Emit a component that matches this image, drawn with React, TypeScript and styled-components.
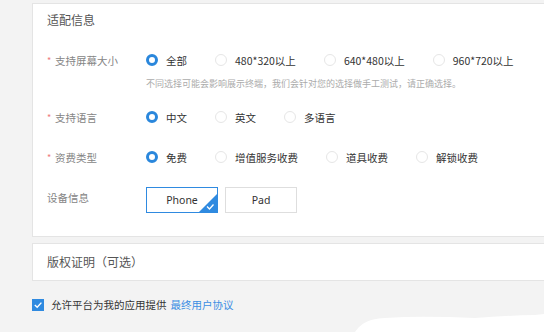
import React from "react";
import styled, { createGlobalStyle } from "styled-components";

const Global = createGlobalStyle`
  html, body { margin: 0; padding: 0; background: #ffffff; }
  body { font-family: "Noto Sans CJK SC", "Noto Sans", sans-serif; }
`;

const Page = styled.div`
  position: relative;
  width: 544px;
  height: 332px;
  background: #f3f3f3;
  padding: 3px 0 0 32px;
  box-sizing: border-box;
  overflow: hidden;
`;

const Card = styled.section<{ $compact?: boolean }>`
  background: #fff;
  border: 1px solid #e4e4e4;
  border-right: none;
  box-sizing: border-box;
  padding: ${(p) => (p.$compact ? "8px 0 8px 14px" : "6px 0 23px 14px")};
  margin-bottom: 6px;
`;

const Title = styled.div`
  font-size: 12px;
  line-height: 20px;
  color: #555;
  height: 20px;
`;

const Row = styled.div<{ $mt: number }>`
  display: flex;
  align-items: center;
  height: 20px;
  margin-top: ${(p) => p.$mt}px;
`;

const Label = styled.div`
  width: 99px;
  flex: none;
  font-size: 10.5px;
  color: #858585;
  display: flex;
  align-items: center;
`;

const Star = styled.span`
  color: #ee7b7b;
  width: 8px;
  font-size: 9px;
`;

const Option = styled.label`
  display: flex;
  align-items: center;
  gap: 8px;
  margin-right: 28px;
  font-size: 10.5px;
  color: #333;
  white-space: nowrap;
`;

const Radio = styled.span<{ $on?: boolean }>`
  width: 12px;
  height: 12px;
  box-sizing: border-box;
  border-radius: 50%;
  border: ${(p) => (p.$on ? "3.5px solid #2a87dc" : "1px solid #e6e6e6")};
  background: #fff;
  flex: none;
`;

const Hint = styled.div`
  margin: 7px 0 0 99px;
  font-size: 9px;
  line-height: 14px;
  color: #ababab;
  white-space: nowrap;
`;

const DeviceRow = styled.div`
  display: flex;
  align-items: flex-start;
  margin-top: 20px;
`;

const DeviceLabel = styled(Label)`
  padding: 3px 0 0 0;
`;

const Devices = styled.div`
  display: flex;
  gap: 7px;
`;

const DeviceBtn = styled.div<{ $on?: boolean }>`
  position: relative;
  width: 72px;
  height: 26px;
  box-sizing: border-box;
  border: ${(p) => (p.$on ? "1.5px solid #2f8ae0" : "1px solid #dedede")};
  display: flex;
  align-items: center;
  justify-content: center;
  font-family: "Noto Sans", sans-serif;
  font-size: 10.5px;
  color: #333;
  background: #fff;
  overflow: hidden;
`;

const Corner = styled.svg`
  position: absolute;
  right: 0;
  bottom: 0;
`;

const Agree = styled.div`
  display: flex;
  align-items: center;
  margin-top: 16px;
  font-size: 10.5px;
  color: #333;
`;

const Check = styled.span`
  width: 12px;
  height: 12px;
  background: #2f8ae0;
  display: flex;
  align-items: center;
  justify-content: center;
  margin-right: 7px;
  flex: none;
`;

const Link = styled.a`
  color: #3b8ee3;
  margin-left: 4px;
  text-decoration: none;
`;

const Tear = styled.svg`
  position: absolute;
  left: 355px;
  top: 308px;
`;

const screens = ["全部", "480*320以上", "640*480以上", "960*720以上"];
const langs = ["中文", "英文", "多语言"];
const fees = ["免费", "增值服务收费", "道具收费", "解锁收费"];

function Group({ items }: { items: string[] }) {
  return (
    <>
      {items.map((t, i) => (
        <Option key={t}>
          <Radio $on={i === 0} />
          {t}
        </Option>
      ))}
    </>
  );
}

export default function App() {
  return (
    <>
      <Global />
      <Page>
        <Card>
          <Title>适配信息</Title>
          <Row $mt={20}>
            <Label>
              <Star>*</Star>支持屏幕大小
            </Label>
            <Group items={screens} />
          </Row>
          <Hint>不同选择可能会影响展示终端，我们会针对您的选择做手工测试，请正确选择。</Hint>
          <Row $mt={16}>
            <Label>
              <Star>*</Star>支持语言
            </Label>
            <Group items={langs} />
          </Row>
          <Row $mt={20}>
            <Label>
              <Star>*</Star>资费类型
            </Label>
            <Group items={fees} />
          </Row>
          <DeviceRow>
            <DeviceLabel>设备信息</DeviceLabel>
            <Devices>
              <DeviceBtn $on>
                Phone
                <Corner width="18" height="18" viewBox="0 0 18 18">
                  <path d="M18 0 L18 18 L0 18 Z" fill="#2f8ae0" />
                  <path d="M8 12.5 L10.5 15 L14.5 10.5" stroke="#fff" strokeWidth="1.3" fill="none" />
                </Corner>
              </DeviceBtn>
              <DeviceBtn>Pad</DeviceBtn>
            </Devices>
          </DeviceRow>
        </Card>
        <Card $compact>
          <Title>版权证明（可选）</Title>
        </Card>
        <Agree>
          <Check>
            <svg width="10" height="10" viewBox="0 0 10 10">
              <path d="M1.8 5 L4.2 7.3 L8.4 2.6" stroke="#fff" strokeWidth="1.4" fill="none" />
            </svg>
          </Check>
          允许平台为我的应用提供<Link>最终用户协议</Link>
        </Agree>
        <Tear width="200" height="24" viewBox="0 0 200 24">
          <path
            d="M0 24 C6 16 12 11 30 10 C60 8 90 9 120 10 C140 9 160 7 180 7 L190 6 L200 6 L200 24 Z"
            fill="#ffffff"
          />
        </Tear>
      </Page>
    </>
  );
}
